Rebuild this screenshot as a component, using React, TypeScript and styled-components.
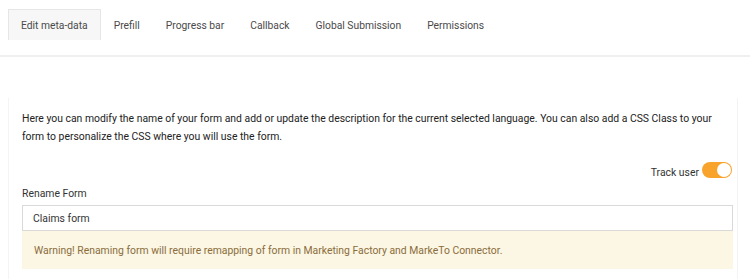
import styled, { createGlobalStyle } from 'styled-components';

const tabs = ['Edit meta-data', 'Prefill', 'Progress bar', 'Callback', 'Global Submission', 'Permissions'];

export default () => {
  return (
    <>
      <GlobalStyle />
      <Page>
        <TabBar>
          {tabs.map((t, i) => (
            <Tab key={t} $active={i === 0}>
              {t}
            </Tab>
          ))}
        </TabBar>

        <Panel>
          <Intro>
            Here you can modify the name of your form and add or update the description for the current selected
            language. You can also add a CSS Class to your form to personalize the CSS where you will use the form.
          </Intro>

          <TrackRow>
            <span>Track user</span>
            <Switch>
              <Knob />
            </Switch>
          </TrackRow>

          <Label>Rename Form</Label>
          <Input defaultValue="Claims form" />
          <Warning>Warning! Renaming form will require remapping of form in Marketing Factory and MarkeTo Connector.</Warning>
        </Panel>
      </Page>
    </>
  );
};

const GlobalStyle = createGlobalStyle`
  html, body {
    margin: 0;
    padding: 0;
    background: #fff;
    font-family: Roboto, "Liberation Sans", Arial, sans-serif;
  }
`;

const Page = styled.div`
  width: 750px;
  height: 279px;
  overflow: hidden;
`;

const TabBar = styled.div`
  display: flex;
  padding: 9px 0 0 8px;
  height: 57px;
  box-sizing: border-box;
  border-bottom: 2px solid #efefef;
`;

const Tab = styled.div<{ $active?: boolean }>`
  height: 31px;
  padding: 0 12px;
  display: flex;
  align-items: center;
  font-size: 10.3px;
  color: #4a4a4a;
  box-sizing: border-box;
  border: 1px solid ${(p) => (p.$active ? '#e6e6e6' : 'transparent')};
  border-bottom: 0;
  background: ${(p) => (p.$active ? '#f7f7f7' : 'transparent')};
`;

const Panel = styled.div`
  margin: 41px 12px 0 8px;
  padding: 12px 5px 0 13px;
  border-left: 1px solid #f4f4f4;
  border-right: 1px solid #f4f4f4;
  height: 200px;
`;

const Intro = styled.p`
  margin: 0;
  font-size: 10.4px;
  line-height: 18px;
  color: #222;
`;

const TrackRow = styled.div`
  display: flex;
  justify-content: flex-end;
  align-items: center;
  gap: 3px;
  margin-top: 15px;
  font-size: 10.4px;
  color: #333;

  span {
    padding-top: 5px;
  }
`;

const Switch = styled.div`
  width: 30px;
  height: 16px;
  border-radius: 8px;
  background: #f8a32b;
  position: relative;
`;

const Knob = styled.div`
  position: absolute;
  right: 1px;
  top: 1px;
  width: 14px;
  height: 14px;
  border-radius: 50%;
  background: #fff;
`;

const Label = styled.div`
  font-size: 10.4px;
  color: #333;
  margin-top: 8px;
`;

const Input = styled.input`
  display: block;
  box-sizing: border-box;
  width: 711px;
  height: 26px;
  margin-top: 5px;
  padding: 0 10px;
  border: 1px solid #d9d9d9;
  font-family: inherit;
  font-size: 10.4px;
  color: #333;
  outline: none;
`;

const Warning = styled.div`
  box-sizing: border-box;
  width: 711px;
  height: 38px;
  padding: 0 12px;
  display: flex;
  align-items: center;
  background: #fcf6e4;
  color: #8a6d3b;
  font-size: 10.4px;
`;
